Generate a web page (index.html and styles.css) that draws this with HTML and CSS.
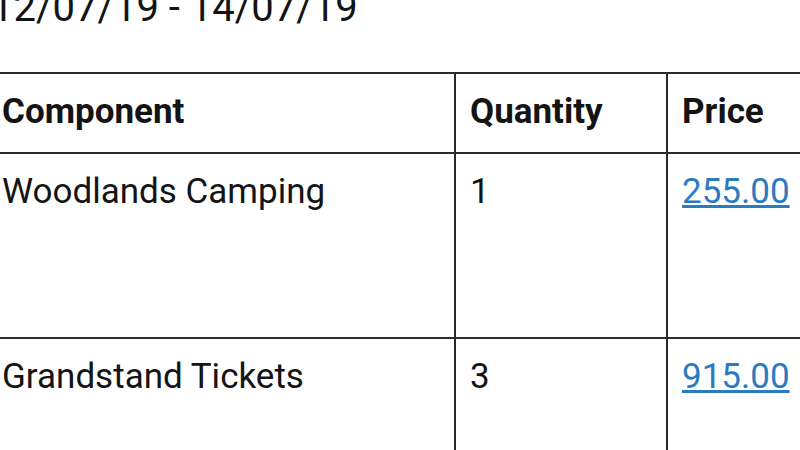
FILE: index.html
```html
<!DOCTYPE html>
<html lang="en">
<head>
    <meta charset="UTF-8">
    <meta name="viewport" content="width=device-width, initial-scale=1.0">
    <title>Booking Summary</title>
    <link rel="stylesheet" href="styles.css">
</head>
<body>

<div class="page">
    <p class="dates">12/07/19 - 14/07/19</p>

    <table class="components">
        <thead>
            <tr>
                <th class="col-name">Component</th>
                <th class="col-qty">Quantity</th>
                <th class="col-price">Price</th>
                <th class="col-notes">Notes</th>
            </tr>
        </thead>
        <tbody>
            <tr class="row-tall">
                <td>Woodlands Camping</td>
                <td>1</td>
                <td><a href="#">255.00</a></td>
                <td>Pitch for up to 6 people, car parking included</td>
            </tr>
            <tr class="row-tall">
                <td>Grandstand Tickets</td>
                <td>3</td>
                <td><a href="#">915.00</a></td>
                <td>Hamilton Straight, seats 12-14</td>
            </tr>
        </tbody>
    </table>
</div>

</body>
</html>
```

FILE: styles.css
```css
* {
    margin: 0;
    padding: 0;
    box-sizing: border-box;
}

body {
    background-color: #ffffff;
    color: #141414;
    font-family: Roboto, "Noto Sans", sans-serif;
    font-size: 35px;
    overflow: hidden;
}

.page {
    margin-left: -14px;
    margin-top: -16px;
}

.dates {
    font-size: 40px;
    line-height: 48px;
    margin-left: 5px;
    margin-bottom: 40px;
}

.components {
    border-collapse: collapse;
    width: 1200px;
}

.components th,
.components td {
    border: 2px solid #2a2a2a;
    text-align: left;
    vertical-align: top;
    line-height: 40px;
    padding: 18px 14px 20px;
}

.components th {
    font-weight: bold;
}

.col-name {
    width: 468px;
}

.col-qty {
    width: 212px;
}

.col-price {
    width: 160px;
}

.row-tall td {
    height: 185px;
}

.components a {
    color: #2a7bbf;
    text-decoration: underline;
}
```
